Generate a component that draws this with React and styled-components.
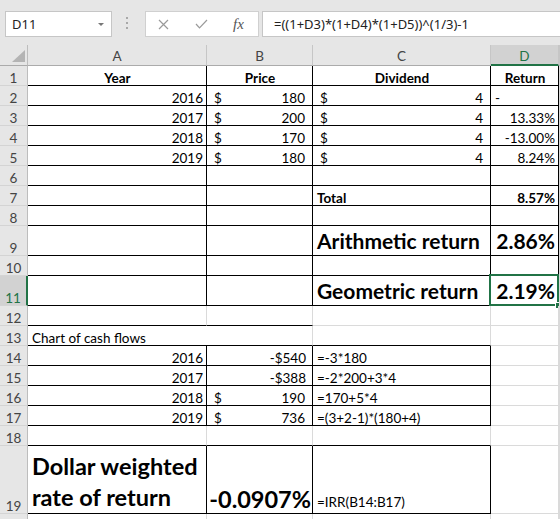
import React from "react";
import styled, { createGlobalStyle } from "styled-components";

const GREEN = "#217346";
const GRID = "#dadada";
const BLACK = "#000";

const GlobalStyle = createGlobalStyle`
  html, body {
    margin: 0;
    padding: 0;
    background: #fff;
  }
  body {
    font-family: Lato, "Liberation Sans", sans-serif;
  }
`;

const Window = styled.div`
  width: 560px;
  height: 519px;
  overflow: hidden;
  background: #fff;
`;

const FormulaBar = styled.div`
  height: 45px;
  box-sizing: border-box;
  background: #e6e6e6;
  display: flex;
  align-items: flex-start;
  padding: 11px 0 0 5px;
`;

const NameBox = styled.div`
  width: 107px;
  height: 26px;
  box-sizing: border-box;
  background: #fff;
  border: 1px solid #c6c6c6;
  display: flex;
  align-items: center;
  justify-content: space-between;
  padding: 0 7px 0 6px;
  font: 13px "Noto Sans", sans-serif;
  color: #222;
`;

const DropArrow = styled.span`
  width: 0;
  height: 0;
  border-left: 3px solid transparent;
  border-right: 3px solid transparent;
  border-top: 3px solid #777;
`;

const Grip = styled.div`
  margin: 6px 0 0 14px;
  display: flex;
  flex-direction: column;
  gap: 3px;

  span {
    width: 2px;
    height: 2px;
    background: #a8a8a8;
  }
`;

const ButtonBox = styled.div`
  margin-left: 17px;
  width: 114px;
  height: 26px;
  box-sizing: border-box;
  background: #fff;
  border: 1px solid #d0d0d0;
  display: flex;
  align-items: center;
  padding-left: 12px;
  gap: 26px;
`;

const Fx = styled.span`
  font: italic 15px "Liberation Serif", serif;
  color: #555;
  margin-left: -1px;
`;

const FormulaInput = styled.div`
  margin-left: 3px;
  flex: 1;
  height: 26px;
  box-sizing: border-box;
  background: #fff;
  border: 1px solid #c6c6c6;
  border-right: none;
  display: flex;
  align-items: center;
  padding-left: 11px;
  font: 13px "Noto Sans", sans-serif;
  color: #222;
  white-space: nowrap;
`;

const Sheet = styled.div`
  display: grid;
  grid-template-columns: 28px 179px 106px 178px 68px 1fr;
  grid-template-rows: ${(p) => p.$rows};
  font-size: 13.5px;
  color: #000;
`;

const Corner = styled.div`
  position: relative;
  background: #e6e6e6;
  border-right: 1px solid #bdbdbd;
  border-bottom: 1px solid #ababab;

  &::after {
    content: "";
    position: absolute;
    right: 2px;
    bottom: 3px;
    border-left: 13px solid transparent;
    border-bottom: 12px solid #b4b4b4;
  }
`;

const ColHeader = styled.div`
  display: flex;
  align-items: center;
  justify-content: center;
  padding-top: 2px;
  background: ${(p) => (p.$selected ? "#d2d2d2" : "#e6e6e6")};
  color: ${(p) => (p.$selected ? GREEN : "#444")};
  border-right: 1px solid #c6c6c6;
  border-bottom: ${(p) =>
    p.$selected ? `2px solid ${GREEN}` : "1px solid #ababab"};
  font-size: 13.5px;
`;

const RowHeader = styled.div`
  display: flex;
  align-items: flex-end;
  justify-content: center;
  background: ${(p) => (p.$selected ? "#d2d2d2" : "#e6e6e6")};
  color: ${(p) => (p.$selected ? GREEN : "#444")};
  border-right: ${(p) =>
    p.$selected ? `2px solid ${GREEN}` : "1px solid #bdbdbd"};
  border-bottom: 1px solid #d4d4d4;
  font-size: 13.5px;
  line-height: 1;
`;

const Cell = styled.div`
  position: relative;
  display: flex;
  align-items: flex-end;
  justify-content: ${(p) => p.$justify};
  grid-column: span ${(p) => p.$span};
  min-width: 0;
  padding: 0 ${(p) => p.$pr}px ${(p) => p.$pb}px ${(p) => p.$pl}px;
  border-right: 1px solid ${(p) => p.$r};
  border-bottom: 1px solid ${(p) => p.$b};
  font-size: ${(p) => p.$size}px;
  font-weight: ${(p) => (p.$bold ? 700 : 400)};
  line-height: ${(p) => (p.$wrap ? "31px" : 1)};
  white-space: ${(p) => (p.$wrap ? "normal" : "nowrap")};
`;

const Selection = styled.div`
  position: absolute;
  top: -2px;
  left: -2px;
  right: -1px;
  bottom: -1px;
  border: 2px solid ${GREEN};
  pointer-events: none;

  &::after {
    content: "";
    position: absolute;
    right: -5px;
    bottom: -5px;
    width: 5px;
    height: 5px;
    background: ${GREEN};
    border: 1px solid #fff;
  }
`;

const E = {};
const big = 21;
const huge = 23.5;

const rows = [
  { n: 1, h: 20, cells: [
    { t: "Year", a: "center", b: 1 },
    { t: "Price", a: "center", b: 1 },
    { t: "Dividend", a: "center", b: 1 },
    { t: "Return", a: "center", b: 1 },
  ] },
  { n: 2, h: 20, cells: [{ t: "2016", a: "right" }, { cur: "$", t: "180" }, { cur: "$", t: "4" }, { t: "-" }] },
  { n: 3, h: 20, cells: [{ t: "2017", a: "right" }, { cur: "$", t: "200" }, { cur: "$", t: "4" }, { t: "13.33%", a: "right" }] },
  { n: 4, h: 20, cells: [{ t: "2018", a: "right" }, { cur: "$", t: "170" }, { cur: "$", t: "4" }, { t: "-13.00%", a: "right" }] },
  { n: 5, h: 20, cells: [{ t: "2019", a: "right" }, { cur: "$", t: "180" }, { cur: "$", t: "4" }, { t: "8.24%", a: "right" }] },
  { n: 6, h: 20, cells: [E, E, E, E] },
  { n: 7, h: 20, cells: [E, E, { t: "Total", b: 1 }, { t: "8.57%", a: "right", b: 1 }] },
  { n: 8, h: 20, cells: [E, E, E, E] },
  { n: 9, h: 30, cells: [E, E, { t: "Arithmetic return", b: 1, s: big }, { t: "2.86%", a: "right", b: 1, s: big }] },
  { n: 10, h: 20, cells: [E, E, E, E] },
  { n: 11, h: 30, sel: true, cells: [E, E, { t: "Geometric return", b: 1, s: big }, { t: "2.19%", a: "right", b: 1, s: big, sel: true }] },
  { n: 12, h: 20, cells: [E, E, E, E] },
  { n: 13, h: 20, cells: [{ t: "Chart of cash flows", span: 2 }, E, E] },
  { n: 14, h: 20, cells: [{ t: "2016", a: "right" }, { t: "-$540", a: "right", pr: 6 }, { t: "=-3*180" }, E] },
  { n: 15, h: 20, cells: [{ t: "2017", a: "right" }, { t: "-$388", a: "right", pr: 6 }, { t: "=-2*200+3*4" }, E] },
  { n: 16, h: 20, cells: [{ t: "2018", a: "right" }, { cur: "$", t: "190" }, { t: "=170+5*4" }, E] },
  { n: 17, h: 20, cells: [{ t: "2019", a: "right" }, { cur: "$", t: "736" }, { t: "=(3+2-1)*(180+4)" }, E] },
  { n: 18, h: 20, cells: [E, E, E, E] },
  { n: 19, h: 68, cells: [
    { t: "Dollar weighted rate of return", b: 1, s: huge, wrap: true, pb: 0 },
    { t: "-0.0907%", a: "right", b: 1, s: huge, pb: 2, pr: 1 },
    { t: "=IRR(B14:B17)", pb: 4 },
    E,
  ] },
  { n: 20, h: 20, hideLabel: true, cells: [E, E, E, E] },
];

// which cells carry the thin black table borders (right / bottom)
const edges = (n, col) => {
  if (n <= 11 && col <= 3) return [BLACK, BLACK];
  if (n === 12) return [GRID, col <= 1 ? BLACK : GRID];
  if (n === 13) return [col === 0 ? BLACK : GRID, col <= 2 ? BLACK : GRID];
  if (n >= 14 && n <= 17 && col <= 2) return [BLACK, BLACK];
  if (n === 18) return [GRID, col <= 2 ? BLACK : GRID];
  if (n === 19 && col <= 2) return [BLACK, BLACK];
  return [GRID, GRID];
};

const justifyOf = { left: "flex-start", right: "flex-end", center: "center" };

const SheetCell = ({ n, col, c }) => {
  const [r, b] = edges(n, col + (c.span ? c.span - 1 : 0));
  const acc = !!c.cur;
  return (
    <Cell
      $r={r}
      $b={b}
      $span={c.span || 1}
      $justify={acc ? "space-between" : justifyOf[c.a || "left"]}
      $pl={acc ? 7 : 4}
      $pr={c.pr ?? (acc ? 7 : 3)}
      $pb={c.pb ?? (c.s ? 4 : 0)}
      $size={c.s || 13.5}
      $bold={c.b}
      $wrap={c.wrap}
    >
      {acc && <span>{c.cur}</span>}
      {c.t && <span>{c.t}</span>}
      {c.sel && <Selection />}
    </Cell>
  );
};

const Cross = () => (
  <svg width="11" height="11" viewBox="0 0 11 11">
    <path d="M1 1 L10 10 M10 1 L1 10" stroke="#9a9a9a" strokeWidth="1.2" fill="none" />
  </svg>
);

const Check = () => (
  <svg width="13" height="10" viewBox="0 0 13 10">
    <path d="M1 5 L4.5 8.8 L12 1" stroke="#9a9a9a" strokeWidth="1.2" fill="none" />
  </svg>
);

export default function App() {
  let col = 0;
  const template = ["21px", ...rows.map((r) => `${r.h}px`)].join(" ");
  return (
    <Window>
      <GlobalStyle />
      <FormulaBar>
        <NameBox>
          D11
          <DropArrow />
        </NameBox>
        <Grip>
          <span />
          <span />
          <span />
        </Grip>
        <ButtonBox>
          <Cross />
          <Check />
          <Fx>fx</Fx>
        </ButtonBox>
        <FormulaInput>=((1+D3)*(1+D4)*(1+D5))^(1/3)-1</FormulaInput>
      </FormulaBar>
      <Sheet $rows={template}>
        <Corner />
        {["A", "B", "C", "D"].map((l) => (
          <ColHeader key={l} $selected={l === "D"}>
            {l}
          </ColHeader>
        ))}
        <ColHeader />
        {rows.map((row) => {
          col = 0;
          return (
            <React.Fragment key={row.n}>
              <RowHeader $selected={row.sel}>{row.hideLabel ? null : row.n}</RowHeader>
              {row.cells.map((c, i) => {
                const here = col;
                col += c.span || 1;
                return <SheetCell key={i} n={row.n} col={here} c={c} />;
              })}
              <Cell $r={GRID} $b={GRID} $span={1} $justify="flex-start" $pl={0} $pr={0} $pb={0} $size={13} />
            </React.Fragment>
          );
        })}
      </Sheet>
    </Window>
  );
}
